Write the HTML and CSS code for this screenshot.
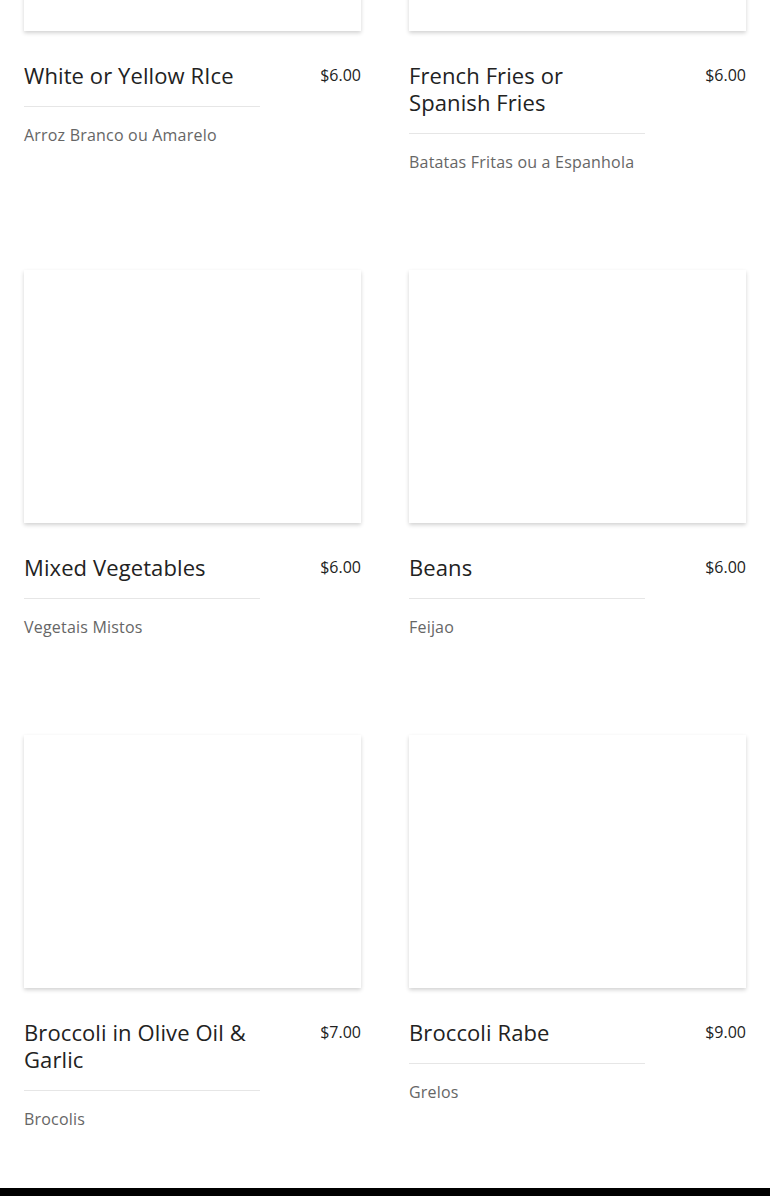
FILE: index.html
```html
<!DOCTYPE html>
<html lang="en">
<head>
  <meta charset="UTF-8">
  <meta name="viewport" content="width=device-width, initial-scale=1.0">
  <title>Sides - Menu</title>
  <link rel="stylesheet" href="styles.css">
</head>
<body>
  <section class="menu-grid">
    <div class="menu-item">
      <div class="item-image"></div>
      <div class="item-head">
        <h3 class="item-title">White or Yellow RIce</h3>
        <span class="item-price">$6.00</span>
      </div>
      <p class="item-desc">Arroz Branco ou Amarelo</p>
    </div>
    <div class="menu-item">
      <div class="item-image"></div>
      <div class="item-head">
        <h3 class="item-title">French Fries or Spanish Fries</h3>
        <span class="item-price">$6.00</span>
      </div>
      <p class="item-desc">Batatas Fritas ou a Espanhola</p>
    </div>
    <div class="menu-item">
      <div class="item-image"></div>
      <div class="item-head">
        <h3 class="item-title">Mixed Vegetables</h3>
        <span class="item-price">$6.00</span>
      </div>
      <p class="item-desc">Vegetais Mistos</p>
    </div>
    <div class="menu-item">
      <div class="item-image"></div>
      <div class="item-head">
        <h3 class="item-title">Beans</h3>
        <span class="item-price">$6.00</span>
      </div>
      <p class="item-desc">Feijao</p>
    </div>
    <div class="menu-item">
      <div class="item-image"></div>
      <div class="item-head">
        <h3 class="item-title">Broccoli in Olive Oil &amp; Garlic</h3>
        <span class="item-price">$7.00</span>
      </div>
      <p class="item-desc">Brocolis</p>
    </div>
    <div class="menu-item">
      <div class="item-image"></div>
      <div class="item-head">
        <h3 class="item-title">Broccoli Rabe</h3>
        <span class="item-price">$9.00</span>
      </div>
      <p class="item-desc">Grelos</p>
    </div>
  </section>
  <footer class="site-footer"></footer>
</body>
</html>
```

FILE: styles.css
```css
body {
  font-family: "Open Sans", "Liberation Sans", sans-serif;
  background-color: #fff;
  color: #222;
  margin: 0;
  padding: 0;
}

.menu-grid {
  display: grid;
  grid-template-columns: 1fr 1fr;
  column-gap: 48px;
  row-gap: 96px;
  padding: 0 24px 57px;
  margin-top: -222px;
}

.item-image {
  height: 253px;
  background-color: #fff;
  box-shadow: 0 2px 4px rgba(0, 0, 0, 0.18);
}

.item-head {
  display: flex;
  align-items: flex-start;
  margin-top: 31px;
}

.item-title {
  width: 70%;
  margin: 0;
  padding-bottom: 17px;
  border-bottom: 1px solid #e6e6e6;
  font-size: 22px;
  font-weight: 400;
  line-height: 27px;
  letter-spacing: 0.1px;
  color: #222;
}

.item-price {
  margin-left: auto;
  font-size: 16px;
  line-height: 27px;
  color: #222;
}

.item-desc {
  margin: 16px 0 0;
  font-size: 16px;
  line-height: 24px;
  letter-spacing: 0.2px;
  color: #666;
}

.site-footer {
  height: 40px;
  background-color: #000;
}
```
